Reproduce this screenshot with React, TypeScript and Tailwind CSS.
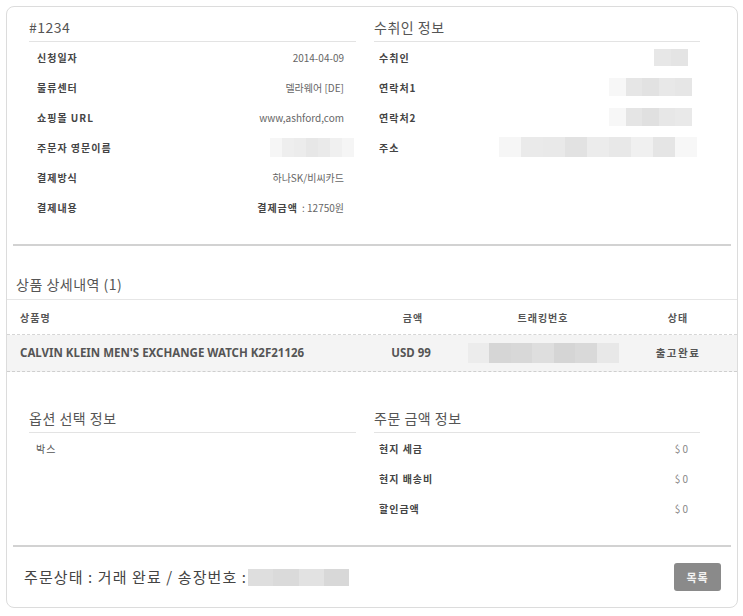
import React from "react";

const KR = "font-['Noto_Sans_CJK_KR','Noto_Sans',sans-serif]";

function Seg({ c }: { c: string }) {
  return <div className={`h-full flex-1 ${c}`} />;
}

function Row({ label, children, pl = "pl-[8px]" }: { label: string; children?: React.ReactNode; pl?: string }) {
  return (
    <div className={`h-[30px] flex items-center justify-between ${pl} pr-[12px]`}>
      <span className="text-[10px] font-bold text-[#444] tracking-[1px]">{label}</span>
      <div className="text-[10px] text-[#666] flex items-center">{children}</div>
    </div>
  );
}

function Title({ children }: { children: React.ReactNode }) {
  return (
    <div className="h-[29px] flex items-center border-b border-[#e3e3e3] text-[14px] text-[#555] tracking-[0.5px]">
      {children}
    </div>
  );
}

export default function App() {
  return (
    <div className={`bg-white w-[743px] h-[616px] pt-[6px] pl-[6px] ${KR}`}>
      <div className="w-[732px] border border-[#dcdcdc] rounded-[8px] bg-white">
        {/* top section */}
        <div className="flex pl-[22px] pt-[6px] pb-[22px] gap-[18px]">
          <div className="w-[327px]">
            <Title>#1234</Title>
            <Row label="신청일자">2014-04-09</Row>
            <Row label="물류센터">델라웨어 [DE]</Row>
            <Row label="쇼핑몰 URL">www,ashford,com</Row>
            <Row label="주문자 영문이름">
              <div className="flex w-[84px] h-[19px] mr-[-10px] bg-[#f1f1f1]">
                <Seg c="bg-[#f6f6f6]" />
                <Seg c="bg-[#eeeeee]" />
                <Seg c="bg-[#ececec]" />
                <Seg c="bg-[#e7e7e7]" />
                <Seg c="bg-[#eaeaea]" />
                <Seg c="bg-[#f0f0f0]" />
                <Seg c="bg-[#f5f5f5]" />
              </div>
            </Row>
            <Row label="결제방식">하나SK/비씨카드</Row>
            <Row label="결제내용">
              <span className="font-bold text-[#444] tracking-[1px]">결제금액</span>
              <span className="ml-[4px]">: 12750원</span>
            </Row>
          </div>
          <div className="w-[326px]">
            <Title>수취인 정보</Title>
            <Row label="수취인" pl="pl-[5px]">
              <div className="flex w-[34px] h-[17px]">
                <Seg c="bg-[#e7e7e7]" />
                <Seg c="bg-[#e4e4e4]" />
              </div>
            </Row>
            <Row label="연락처1" pl="pl-[5px]">
              <div className="flex w-[83px] h-[18px] mr-[-4px]">
                <Seg c="bg-[#f7f7f7]" />
                <Seg c="bg-[#e6e6e6]" />
                <Seg c="bg-[#e2e2e2]" />
                <Seg c="bg-[#e8e8e8]" />
                <Seg c="bg-[#e6e6e6]" />
              </div>
            </Row>
            <Row label="연락처2" pl="pl-[5px]">
              <div className="flex w-[83px] h-[18px] mr-[-4px]">
                <Seg c="bg-[#f7f7f7]" />
                <Seg c="bg-[#e5e5e5]" />
                <Seg c="bg-[#e0e0e0]" />
                <Seg c="bg-[#e7e7e7]" />
                <Seg c="bg-[#e9e9e9]" />
              </div>
            </Row>
            <Row label="주소" pl="pl-[5px]">
              <div className="flex w-[198px] h-[20px] mr-[-9px]">
                <Seg c="bg-[#f6f6f6]" />
                <Seg c="bg-[#eaeaea]" />
                <Seg c="bg-[#e9e9e9]" />
                <Seg c="bg-[#e2e2e2]" />
                <Seg c="bg-[#ececec]" />
                <Seg c="bg-[#e8e8e8]" />
                <Seg c="bg-[#f0f0f0]" />
                <Seg c="bg-[#e5e5e5]" />
                <Seg c="bg-[#f7f7f7]" />
              </div>
            </Row>
          </div>
        </div>

        <div className="mx-[6px] h-[2px] bg-[#d2d2d2]" />

        {/* product section */}
        <div className="pt-[30px] pb-[7px] pl-[9px] border-b border-[#e6e6e6] text-[14px] leading-[16px] text-[#555] tracking-[0.5px]">
          상품 상세내역 (1)
        </div>
        <div className="grid grid-cols-[352px_108px_152px_1fr] h-[35px] items-center border-b border-dashed border-[#d6d6d6] text-[10px] font-bold text-[#555] tracking-[1px]">
          <div className="pl-[13px]">상품명</div>
          <div className="text-center">금액</div>
          <div className="text-center">트래킹번호</div>
          <div className="text-center">상태</div>
        </div>
        <div className="grid grid-cols-[352px_108px_152px_1fr] h-[37px] items-center bg-[#f4f4f4] border-b border-dashed border-[#cfcfcf] text-[#555]">
          <div className="pl-[13px] font-['Noto_Sans',sans-serif] font-bold text-[11.5px]">
            CALVIN KLEIN MEN'S EXCHANGE WATCH K2F21126
          </div>
          <div className="text-center font-['Noto_Sans',sans-serif] font-bold text-[11.5px] pr-[4px]">USD 99</div>
          <div className="flex justify-center">
            <div className="flex w-[151px] h-[20px]">
              <Seg c="bg-[#ececec]" />
              <Seg c="bg-[#d6d6d6]" />
              <Seg c="bg-[#d8d8d8]" />
              <Seg c="bg-[#dedede]" />
              <Seg c="bg-[#d5d5d5]" />
              <Seg c="bg-[#d9d9d9]" />
              <Seg c="bg-[#e8e8e8]" />
            </div>
          </div>
          <div className="text-center text-[10.5px] font-bold tracking-[1.5px]">출고완료</div>
        </div>

        {/* bottom section */}
        <div className="flex pl-[22px] pt-[32px] pb-[22px] gap-[18px]">
          <div className="w-[327px]">
            <Title>옵션 선택 정보</Title>
            <div className="h-[30px] flex items-center pl-[7px] text-[10px] text-[#555] tracking-[1px]">박스</div>
          </div>
          <div className="w-[326px]">
            <Title>주문 금액 정보</Title>
            <Row label="현지 세금" pl="pl-[5px]"><span className="text-[#888]">$ 0</span></Row>
            <Row label="현지 배송비" pl="pl-[5px]"><span className="text-[#888]">$ 0</span></Row>
            <Row label="할인금액" pl="pl-[5px]"><span className="text-[#888]">$ 0</span></Row>
          </div>
        </div>

        <div className="mx-[6px] h-[2px] bg-[#d2d2d2]" />

        {/* footer */}
        <div className="h-[60px] flex items-center justify-between pl-[17px] pr-[16px]">
          <div className="flex items-center text-[15px] text-[#444] tracking-[1.1px]">
            <span>주문상태 : 거래 완료 / 송장번호 :</span>
            <div className="flex w-[101px] h-[17px] ml-[1px]">
              <Seg c="bg-[#dedede]" />
              <Seg c="bg-[#dadada]" />
              <Seg c="bg-[#e2e2e2]" />
              <Seg c="bg-[#d8d8d8]" />
            </div>
          </div>
          <button className="w-[47px] h-[28px] rounded-[3px] bg-[#8a8a8a] text-[11px] font-bold text-[#f2f2f2] tracking-[1px]">
            목록
          </button>
        </div>
      </div>
    </div>
  );
}
